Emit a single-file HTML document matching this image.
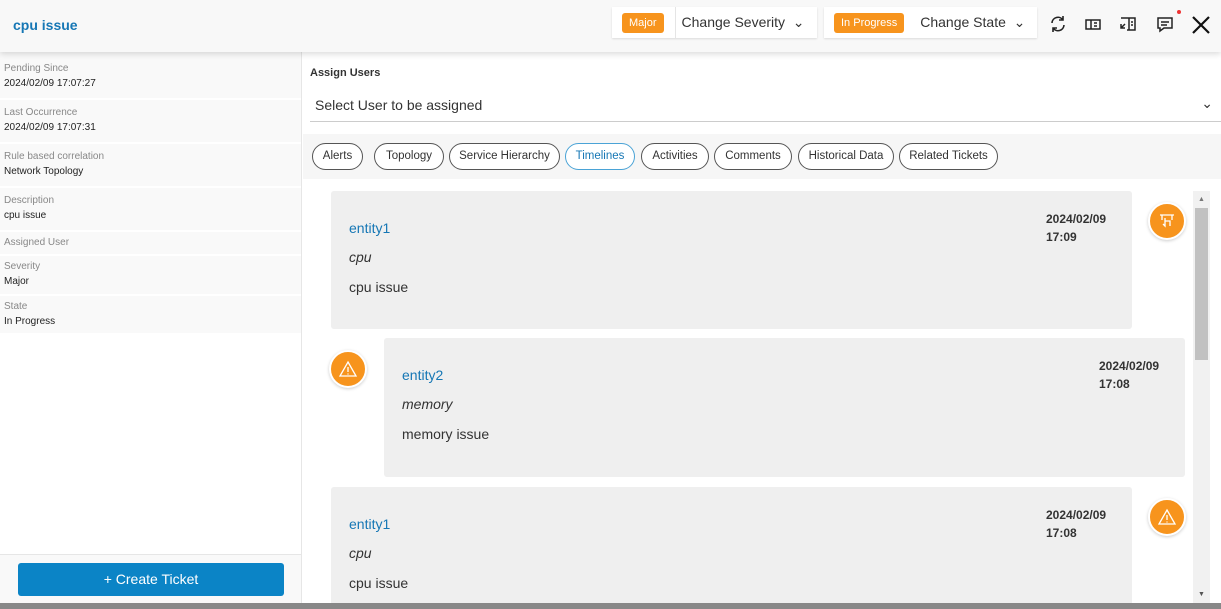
<!DOCTYPE html>
<html><head><meta charset="utf-8"><style>
*{box-sizing:border-box;margin:0;padding:0}
html,body{width:1221px;height:609px;overflow:hidden}
body{font-family:"Liberation Sans",sans-serif;background:#fff;position:relative;color:#222}
.hdr{position:absolute;left:0;top:0;width:1221px;height:52px;background:#f8f8f8;box-shadow:0 2px 6px rgba(0,0,0,.15);z-index:2}
.title{position:absolute;left:13px;top:17px;font-size:14px;font-weight:bold;color:#1677b5}
.grp{position:absolute;top:7px;height:31px;background:#fff;box-shadow:0 1px 2px rgba(0,0,0,.12);display:flex;align-items:center;font-size:14px;color:#333}
.badge{background:#f7941d;color:#fff;font-size:11px;border-radius:3px;padding:4px 7px;margin-left:10px}
.ic{position:absolute;top:14px;width:20px;height:20px}
.left{position:absolute;left:0;top:52px;width:302px;height:551px;background:#f9f9f9;border-right:1px solid #e6e6e6;padding-top:4px}
.row{padding:6px 4px;border-bottom:2px solid #fff;height:44px}
.row .l{font-size:10px;color:#888;line-height:14px}
.row .v{font-size:10px;color:#222;line-height:16px}
.btn{position:absolute;left:18px;top:563px;width:266px;height:33px;background:#0b84c6;border-radius:3px;color:#fff;font-size:14px;text-align:center;line-height:33px}
.tabs{position:absolute;left:303px;top:134px;width:918px;height:45px;background:#f6f6f6}
.tab{position:absolute;top:9px;height:27px;border:1px solid #555;border-radius:14px;font-size:11.5px;line-height:25px;text-align:center;color:#333;background:#fff}
.clip{position:absolute;left:303px;top:179px;width:918px;height:424px;overflow:hidden}
.card{position:absolute;background:#efefef;border-radius:3px}
.card .e{position:absolute;left:18px;top:29px;font-size:14px;color:#1677b5}
.card .m{position:absolute;left:18px;top:58px;font-size:14px;font-style:italic;color:#333}
.card .d{position:absolute;left:18px;top:88px;font-size:14px;color:#333}
.card .t{position:absolute;right:0;width:86px;top:19px;font-size:12px;font-weight:bold;color:#333;line-height:18px}
.circ{position:absolute;width:38px;height:38px;border-radius:50%;background:#f7941d;border:2px solid #fff;box-shadow:0 1px 3px rgba(0,0,0,.2)}
</style></head><body>
<div class="hdr">
<div class="title">cpu issue</div>
<div class="grp" style="left:612px;width:205px"><span class="badge">Major</span><span style="border-left:1px solid #e5e5e5;height:31px;margin-left:11px;padding-left:6px;line-height:31px">Change Severity &nbsp;⌄</span></div>
<div class="grp" style="left:824px;width:213px"><span class="badge">In Progress</span><span style="margin-left:16px">Change State &nbsp;⌄</span></div>
<svg class="ic" style="left:1048px" viewBox="0 0 20 20" fill="none" stroke="#222" stroke-width="1.6"><path d="M4 9a6 6 0 0 1 11-3M16 11a6 6 0 0 1-11 3M15 2v4h-4M5 18v-4h4"/></svg>
<svg class="ic" style="left:1083px" viewBox="0 0 20 20" fill="none" stroke="#222" stroke-width="1.5"><rect x="3" y="6" width="14" height="9"/><path d="M8 6v9M11 9h3M11 12h3"/></svg>
<svg class="ic" style="left:1118px" viewBox="0 0 20 20" fill="none" stroke="#222" stroke-width="1.5"><path d="M3 4h14v12h-8M11 4v12M13 8h2M13 11h2M3 14l4-4M3 10v4h4"/></svg>
<svg class="ic" style="left:1155px" viewBox="0 0 20 20" fill="none" stroke="#222" stroke-width="1.5"><path d="M3 4h14v10H9l-4 3v-3H3z M6 8h8M6 11h6"/></svg>
<div style="position:absolute;left:1177px;top:10px;width:4px;height:4px;border-radius:50%;background:#e33"></div>
<svg class="ic" style="left:1191px;top:15px" viewBox="0 0 20 20" stroke="#111" stroke-width="2.2"><path d="M2 2l16 16M18 2L2 18"/></svg>
</div>
<div class="left">
<div class="row"><div class="l">Pending Since</div><div class="v">2024/02/09 17:07:27</div></div>
<div class="row"><div class="l">Last Occurrence</div><div class="v">2024/02/09 17:07:31</div></div>
<div class="row"><div class="l">Rule based correlation</div><div class="v">Network Topology</div></div>
<div class="row"><div class="l">Description</div><div class="v">cpu issue</div></div>
<div class="row" style="height:24px;padding-top:4px"><div class="l">Assigned User</div></div>
<div class="row" style="height:40px;padding-top:4px"><div class="l">Severity</div><div class="v">Major</div></div>
<div class="row" style="height:41px;padding-top:4px;border-bottom:1px solid #ddd"><div class="l">State</div><div class="v">In Progress</div></div>
<div style="position:absolute;left:0;top:281px;width:301px;height:222px;background:#fff;border-bottom:1px solid #e6e6e6"></div>
</div>
<div class="btn">+ Create Ticket</div>
<div style="position:absolute;left:310px;top:67px;font-size:11px;font-weight:bold;color:#333">Assign Users</div>
<div style="position:absolute;left:310px;top:97px;width:911px;height:25px;border-bottom:1px solid #ccc;font-size:14px;color:#333;padding-left:5px">Select User to be assigned<span style="position:absolute;right:8px;top:-2px">⌄</span></div>
<div class="tabs">
<div class="tab" style="left:9px;width:51px">Alerts</div>
<div class="tab" style="left:71px;width:70px">Topology</div>
<div class="tab" style="left:146px;width:111px">Service Hierarchy</div>
<div class="tab" style="left:262px;width:70px;border-color:#4aa3d6;color:#1677b5">Timelines</div>
<div class="tab" style="left:338px;width:68px">Activities</div>
<div class="tab" style="left:411px;width:78px">Comments</div>
<div class="tab" style="left:495px;width:96px">Historical Data</div>
<div class="tab" style="left:596px;width:99px">Related Tickets</div>
</div>
<div class="clip">
<div class="card" style="left:28px;top:12px;width:801px;height:138px"><div class="e">entity1</div><div class="m">cpu</div><div class="d">cpu issue</div><div class="t">2024/02/09<br>17:09</div></div>
<div class="circ" style="left:845px;top:23px"><svg width="34" height="34" viewBox="0 0 34 34" fill="none" stroke="#fff" stroke-width="1.3"><path d="M10 11h14M12 11v5M22 11v5M15 14v8l-2-2M15 17h5v5"/></svg></div>
<div class="card" style="left:81px;top:159px;width:801px;height:139px"><div class="e">entity2</div><div class="m">memory</div><div class="d">memory issue</div><div class="t">2024/02/09<br>17:08</div></div>
<div class="circ" style="left:26px;top:171px"><svg width="34" height="34" viewBox="0 0 34 34" fill="none" stroke="#fff" stroke-width="1.3"><path d="M17 10l8 14H9z M17 15v5M17 21.5v1"/></svg></div>
<div class="card" style="left:28px;top:308px;width:801px;height:130px"><div class="e">entity1</div><div class="m">cpu</div><div class="d">cpu issue</div><div class="t">2024/02/09<br>17:08</div></div>
<div class="circ" style="left:845px;top:319px"><svg width="34" height="34" viewBox="0 0 34 34" fill="none" stroke="#fff" stroke-width="1.3"><path d="M17 10l8 14H9z M17 15v5M17 21.5v1"/></svg></div>
</div>
<div style="position:absolute;left:1193px;top:191px;width:17px;height:412px;background:#f1f1f1"><div style="position:absolute;left:2px;top:17px;width:13px;height:152px;background:#c1c1c1"></div><div style="position:absolute;left:5px;top:5px;font-size:7px;color:#777">▲</div><div style="position:absolute;left:5px;bottom:5px;font-size:7px;color:#555">▼</div></div>
<div style="position:absolute;left:0;top:603px;width:1221px;height:6px;background:#888"></div>
</body></html>
